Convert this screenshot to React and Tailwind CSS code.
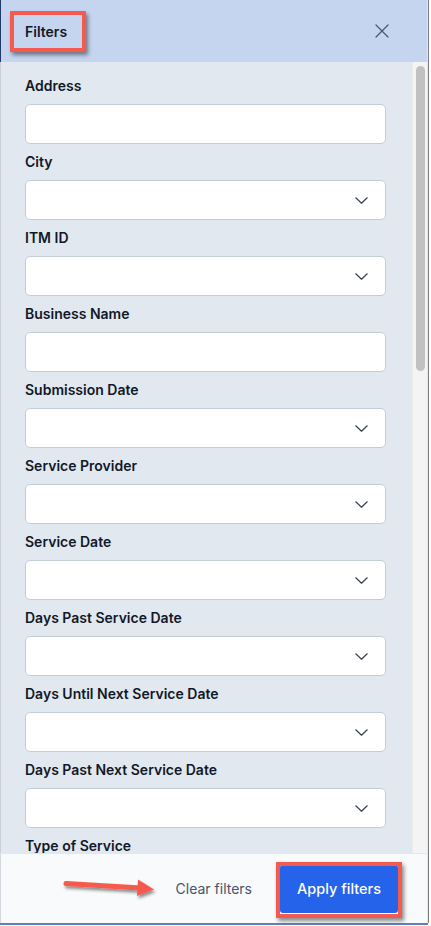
import React from "react";

const fields = [
  { label: "Address", type: "text" },
  { label: "City", type: "select" },
  { label: "ITM ID", type: "select" },
  { label: "Business Name", type: "text" },
  { label: "Submission Date", type: "select" },
  { label: "Service Provider", type: "select" },
  { label: "Service Date", type: "select" },
  { label: "Days Past Service Date", type: "select" },
  { label: "Days Until Next Service Date", type: "select" },
  { label: "Days Past Next Service Date", type: "select" },
  { label: "Type of Service", type: "select" },
];

function Chevron() {
  return (
    <svg width="13" height="7" viewBox="0 0 13 7" fill="none">
      <path d="M0.8 0.8l5.7 5.4 5.7-5.4" stroke="#374151" strokeWidth="1.2" strokeLinecap="round" strokeLinejoin="round" />
    </svg>
  );
}

function Field({ label, type }) {
  return (
    <div className="mb-2">
      <label className="block h-5 leading-5 text-[14px] font-semibold text-[#111827] mb-2">
        {label}
      </label>
      <div className="h-10 w-full bg-white rounded-[5px] border border-[#c3cdda] flex items-center justify-end pr-[17px]">
        {type === "select" && <Chevron />}
      </div>
    </div>
  );
}

export default function App() {
  return (
    <div
      className="relative w-[431px] h-[926px] bg-white flex overflow-hidden"
      style={{ fontFamily: "Inter, 'Liberation Sans', sans-serif" }}
    >
      <div className="w-[427px] h-[923px] flex flex-col">
        {/* header */}
        <div className="h-[62px] bg-[#c5d5ef] border-l border-[#1f3a68] flex items-center justify-between pl-[24px] pr-[38px]">
          <h2 className="text-[14px] font-semibold text-[#111827]">Filters</h2>
          <button className="text-[#4b5563]">
            <svg width="14" height="14" viewBox="0 0 14 14" fill="none">
              <path d="M1 1l12 12M13 1L1 13" stroke="#4b5563" strokeWidth="1.2" strokeLinecap="round" />
            </svg>
          </button>
        </div>

        {/* body */}
        <div className="flex h-[791px] bg-[#e2e8f0] border-l border-[#c9cfd8]">
          <div className="flex-1 overflow-hidden pt-[14px] pl-[24px] pr-[26px]">
            {fields.map((f) => (
              <Field key={f.label} label={f.label} type={f.type} />
            ))}
          </div>
          <div className="w-[15px] bg-[#f4f4f4] border-l border-[#ececec] pt-[4px] flex justify-center">
            <div className="w-[9px] h-[305px] rounded-full bg-[#c1c1c1]" />
          </div>
        </div>

        {/* footer */}
        <div className="flex-1 bg-[#f8fafc] border-l border-[#d4d8de] border-t border-t-[#e5e7eb] flex items-center justify-end gap-[28px] pr-[29px]">
          <button className="text-[14px] text-[#475569]">Clear filters</button>
          <button className="h-[48px] w-[118px] bg-[#2563eb] text-white text-[14.5px] font-medium rounded-[3px]">
            Apply filters
          </button>
        </div>
      </div>
      <div className="w-[1px] h-[923px] bg-[#e6e6e6]" />
      <div className="w-[1px] h-[923px] bg-[#7d7d7d]" />
      <div className="absolute left-0 top-[923px] w-[428px] h-[2px] bg-[#5d81b8]" />

      {/* annotations */}
      <div className="absolute left-[10px] top-[11px] w-[76px] h-[41px] border-4 border-[#f55a4e] shadow-[2px_3px_4px_rgba(0,0,0,0.45)]" />
      <div className="absolute left-[276px] top-[862px] w-[126px] h-[56px] border-4 border-[#f55a4e] shadow-[2px_3px_4px_rgba(0,0,0,0.45)]" />
      <svg className="absolute left-[55px] top-[872px]" width="110" height="32" viewBox="0 0 110 32">
        <defs>
          <filter id="sh" x="-20%" y="-50%" width="140%" height="200%">
            <feDropShadow dx="1.5" dy="2.5" stdDeviation="1.5" floodColor="#000" floodOpacity="0.45" />
          </filter>
        </defs>
        <g filter="url(#sh)">
          <path d="M11 11.5L86 16" stroke="#f55a4e" strokeWidth="5" strokeLinecap="round" />
          <path d="M83 7.5L99 17.5L82 24Z" fill="#f55a4e" />
        </g>
      </svg>
    </div>
  );
}
